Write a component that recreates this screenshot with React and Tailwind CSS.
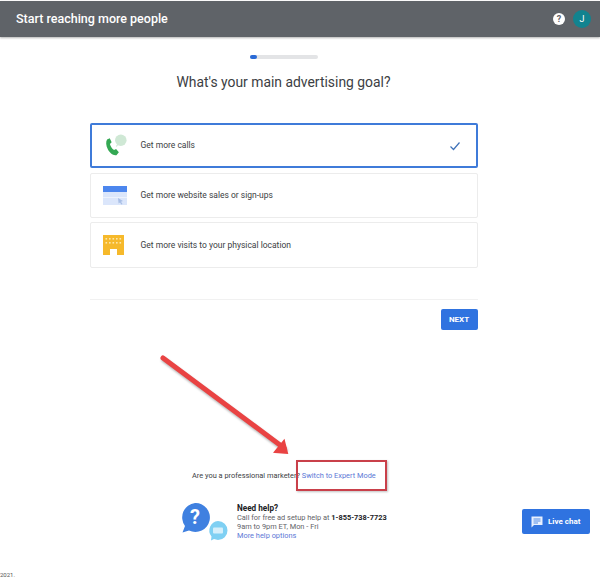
const sans = 'font-["Roboto","Liberation_Sans",sans-serif]';

function Card({ icon, label, selected, className = "" }) {
  return (
    <div className={`flex items-center rounded-[2px] bg-white ${selected ? "border-2 border-[#3f7bd9] h-[45px] pl-[11px] pr-[14px]" : "border border-[#ececec] h-[45px] pl-[12px] pr-[15px]"} ${className}`}>
      <div className="w-[25px] h-[25px] flex items-center justify-start shrink-0">{icon}</div>
      <span className="ml-[13px] text-[8.5px] text-[#3c4043] leading-none">{label}</span>
      {selected && (
        <svg className="ml-auto" width="14" height="14" viewBox="0 0 14 14" fill="none">
          <path d="M2.5 7.5 L5.5 10.5 L11.5 3.5" stroke="#3f72b8" strokeWidth="1.2" />
        </svg>
      )}
    </div>
  );
}

const PhoneIcon = (
  <svg width="26" height="26" viewBox="0 0 26 26">
    <circle cx="18.5" cy="7" r="6" fill="#cfe8d5" />
    <path d="M14 12 L13.5 14 L16 12.5Z" fill="#cfe8d5" />
    <path d="M4.2 6.2 L7 5 L9 9.2 L7.2 11 C7.8 13.5 9.5 16 11.5 17.2 L13.6 16 L16.5 19.6 L14 22.5 C11 23.6 7 20.5 5 16.5 C3 12.5 2.8 8.5 4.2 6.2Z" fill="#34a853" />
  </svg>
);
const WebIcon = (
  <svg width="24" height="20" viewBox="0 0 24 20">
    <rect x="0" y="0" width="24" height="19" fill="#dbe6fb" />
    <rect x="0" y="0" width="24" height="6" fill="#4c86ee" />
    <rect x="0" y="11" width="24" height="1" fill="#eef3fd" />
    <path d="M15 12 L20 15 L18 15.8 L19.5 18 L18.3 18.5 L17 16.4 L15.6 17.5Z" fill="#a9bfe6" />
  </svg>
);
const StoreIcon = (
  <svg width="21" height="20" viewBox="0 0 21 20">
    <path d="M0 0 H21 V20 H14 V14 H7 V20 H0Z" fill="#f6b92b" />
    {[3, 6.5, 10, 13.5, 17].map((x) => (
      <g key={x}>
        <rect x={x - 0.5} y="3" width="1.6" height="1.6" fill="#fde7a8" />
        <rect x={x - 0.5} y="7" width="1.6" height="1.6" fill="#fde7a8" />
      </g>
    ))}
  </svg>
);

export default function App() {
  return (
    <div className={`relative w-[600px] h-[578px] overflow-hidden bg-white ${sans}`}>
      <header className="mt-px h-[36px] bg-[#5f6368] shadow-[0_1px_2px_rgba(0,0,0,0.3)] flex items-center pl-[16px] pr-[9px]">
        <h1 className="text-[12.5px] font-medium text-white leading-none">Start reaching more people</h1>
        <div className="ml-auto flex items-center gap-[8px]">
          <div className="w-[12px] h-[12px] rounded-full bg-white text-[#5f6368] text-[9px] font-bold leading-[12px] text-center">?</div>
          <div className="w-[18px] h-[18px] rounded-full bg-[#12838f] text-white text-[9px] leading-[18px] text-center">J</div>
        </div>
      </header>

      <main className="w-[567px] flex flex-col items-center">
        <div className="mt-[18px] w-[68px] h-[4px] rounded-full bg-[#e3e4e6]">
          <div className="w-[7px] h-[4px] rounded-full bg-[#2a6ad6]" />
        </div>
        <h2 className="mt-[14px] text-[13.9px] leading-[18px] text-[#3c4043]">What's your main advertising goal?</h2>

        <div className="mt-[32px] w-[388px] flex flex-col">
          <Card selected icon={PhoneIcon} label="Get more calls" />
          <Card className="mt-[5px]" icon={WebIcon} label="Get more website sales or sign-ups" />
          <Card className="mt-[4px] !h-[46px]" icon={StoreIcon} label="Get more visits to your physical location" />
          <div className="mt-[31px] h-px bg-[#f1f1f1]" />
          <div className="mt-[9px] flex justify-end">
            <button className="w-[37px] h-[21px] rounded-[2px] bg-[#2f73e0] text-white text-[8px] font-bold leading-none">NEXT</button>
          </div>
        </div>

        <p className="mt-[141px] text-[7.4px] leading-[10px] text-[#3c4043] w-full pl-[192px]">
          Are you a professional marketer? <span className="text-[#5b78d6]">Switch to Expert Mode</span>
        </p>

        <div className="mt-[25px] w-full pl-[180px] flex items-start">
          <svg width="50" height="38" viewBox="0 0 50 38" className="shrink-0 mt-[-3px]">
            <path d="M15 0 A14.5 14.5 0 1 1 9 27.5 L2.5 29.5 L5 23 A14.5 14.5 0 0 1 15 0Z" fill="#3f80e0" />
            <text x="15" y="21" textAnchor="middle" fontSize="20" fontWeight="700" fill="#fff" fontFamily="Roboto, sans-serif">?</text>
            <path d="M38 18 A9.5 9.5 0 1 1 38 37 L34 36 L31 37.5 L31.5 33.5 A9.5 9.5 0 0 1 38 18Z" fill="#7fd0f3" />
            <rect x="33" y="24.5" width="10" height="6" rx="1" fill="#d5effb" />
          </svg>
          <div className="ml-[7px] text-[7.4px] leading-[9px] text-[#5f6368] mt-[-3px]">
            <div className="text-[8.2px] leading-[10px] font-bold text-[#202124]">Need help?</div>
            <div className="whitespace-nowrap">Call for free ad setup help at <b className="text-[#202124]">1-855-738-7723</b></div>
            <div>9am to 9pm ET, Mon - Fri</div>
            <div className="text-[#5b78d6]">More help options</div>
          </div>
        </div>
      </main>

      {/* annotation: arrow */}
      <svg className="absolute left-0 top-0 pointer-events-none" width="600" height="578" viewBox="0 0 600 578" fill="none">
        <path d="M163 358 L284 448" stroke="#e94343" strokeWidth="5" strokeLinecap="round" style={{ filter: "drop-shadow(1px 2px 1px rgba(0,0,0,0.3))" }} />
        <path d="M275 452 L287 453 L284 441Z" fill="#e94343" stroke="#e94343" strokeWidth="2" />
      </svg>
      {/* annotation: red box */}
      <div className="absolute left-[296px] top-[460px] w-[91px] h-[31px] border-2 border-[#c9404a] shadow-[1px_1px_2px_rgba(0,0,0,0.25)]" />

      <button className="absolute left-[522px] top-[509px] w-[68px] h-[25px] rounded-[2px] bg-[#2f73e0] text-white flex items-center pl-[9px] gap-[5px] text-[8px] font-bold">
        <svg width="12" height="12" viewBox="0 0 12 12"><path d="M0.5 0.5 H11.5 V9 H3 L0.5 11.5Z" fill="#e8f0fe" /><path d="M2.5 3 H9.5 M2.5 5 H9.5 M2.5 7 H7" stroke="#2f73e0" strokeWidth="0.8" /></svg>
        Live chat
      </button>

      <span className="absolute left-0 bottom-[-1px] text-[6px] leading-[8px] text-[#555]">2021.</span>
    </div>
  );
}
